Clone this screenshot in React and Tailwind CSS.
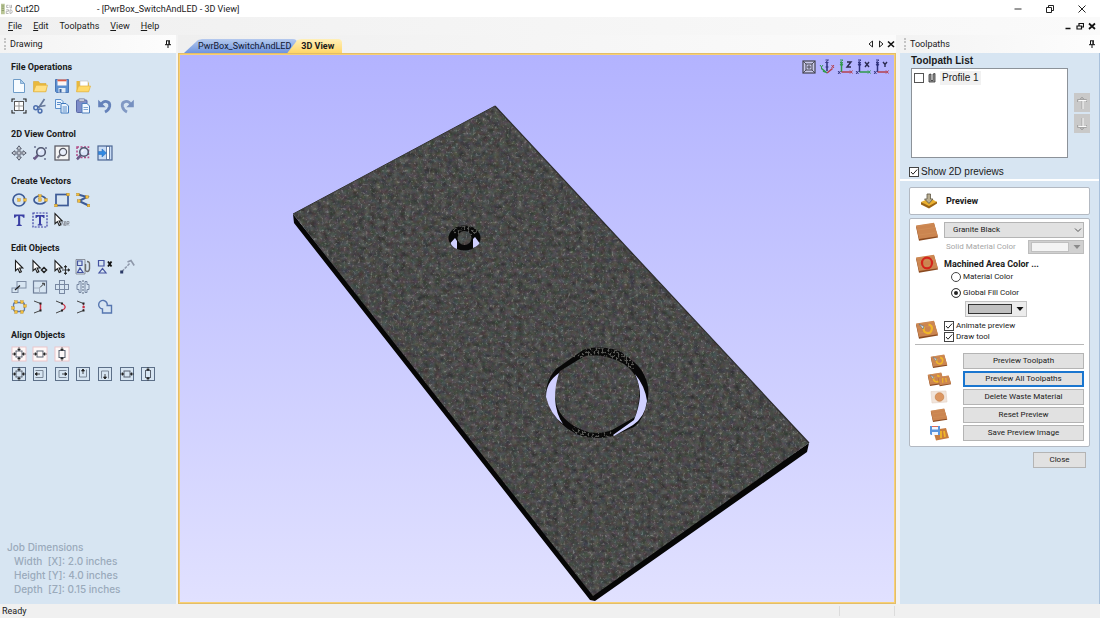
import React from "react";

const NAVY = "#3c5a96";

function Ico({ children, box = "0 0 16 16", className = "h-4 w-4" }) {
  return (
    <svg viewBox={box} className={className} fill="none" aria-hidden="true">
      {children}
    </svg>
  );
}

const Folder = () => (
  <>
    <path d="M1.5 13.5V3.5h5l1.5 2h6v8z" fill="#e9b93c" stroke="#d9a832" strokeWidth=".6" />
    <path d="M1.5 13.8 4 7.2h11.5l-1.8 6.6z" fill="#ffe084" stroke="#e3b23c" strokeWidth=".7" />
  </>
);
const Lens = ({ x = 9.5, y = 6.5 }) => (
  <>
    <path d={`M${x - 2.8} ${y + 2.8}l-4.2 4.6`} stroke="#6a5a86" strokeWidth="2.5" />
    <circle cx={x} cy={y} r="4.3" fill="#dbe5f8" stroke="#50566e" strokeWidth="1.6" />
    <path d={`M${x - 2} ${y}q.3-2 2.2-2.2`} stroke="#fff" />
  </>
);
const Pointer = ({ x = 0 }) => (
  <path transform={`translate(${x} 0)`} d="M3.5 1.5v10.2l2.4-2.1 1.8 4 1.7-.8-1.8-3.8h3.2z" fill="#fff" stroke="#1c1c1c" strokeWidth="1.1" />
);
const Arrows = ({ h, v, inset = 0 }) => (
  <g fill="#222" stroke="#222" strokeWidth=".6">
    {h && <path d={`M${1 + inset} 8h3M${15 - inset} 8h-3M3 6.6 4.8 8 3 9.4zM13 6.6 11.2 8 13 9.4z`} />}
    {v && <path d={`M8 ${1 + inset}v3M8 ${15 - inset}v-3M6.6 3 8 4.8 9.4 3zM6.6 13 8 11.2 9.4 13z`} />}
  </g>
);
const Frame = () => <rect x="1.5" y="1.5" width="13" height="13" stroke="#5c6f88" />;
const PinkFrame = () => <rect x="1" y="1" width="14" height="14" fill="#fdf8f8" stroke="#ecc6ca" />;
const Node = ({ x, y }) => <rect x={x - 1.3} y={y - 1.3} width="2.6" height="2.6" fill="#f3bd3a" stroke="#b98a22" strokeWidth=".4" />;

const groups = [
  {
    title: "File Operations",
    rows: [
      [
        ["New", <><path d="M2.5 1.5h7l4 4v9h-11z" fill="#f6fbff" stroke="#6e9cc8" /><path d="M9.5 1.5v4h4z" fill="#a9cbea" stroke="#6e9cc8" strokeWidth=".8" /></>],
        ["Open", <Folder />],
        ["Save", <><path d="M1.5 1.5h13v13h-12l-1-1z" fill="#5c8fd0" stroke="#4a76b4" /><rect x="3.5" y="1.5" width="9" height="6" fill="#fdf6f4" /><rect x="3.5" y="1.5" width="9" height="1.8" fill="#dd5b44" /><rect x="4.5" y="10" width="7" height="4.5" fill="#e2ecf6" /><rect x="5.5" y="11" width="2" height="3.5" fill="#3e65a0" /></>],
        ["Import", <><path d="M1.5 13.5V3h4l1 1.500h7.500v9z" fill="#e9b93c" /><path d="M5 3h8v7H5z" fill="#fff" stroke="#b9b9b9" strokeWidth=".6" /><path d="M1.500 13.800 3.500 8h12l-1.800 5.800z" fill="#ffd968" stroke="#e3b23c" strokeWidth=".7" /></>],
      ],
      [
        ["Job setup", <><rect x="3.500" y="3.500" width="9" height="9" fill="#fff" stroke="#555" /><path d="M8 3.500v9M3.500 8h9" stroke="#999" /><path d="M1 4V1h3M12 1h3v3M15 12v3h-3M4 15H1v-3" stroke="#222" strokeWidth="1.100" /></>],
        ["Cut", <><path d="M12.500 1 6.500 10M13.500 7.500 5 9" stroke="#66789a" strokeWidth="1.700" /><circle cx="3.800" cy="9.800" r="2" stroke="#4d6fae" strokeWidth="1.500" /><circle cx="8" cy="13" r="1.900" stroke="#4d6fae" strokeWidth="1.500" /></>],
        ["Copy", <><path d="M1.500 1.500h5.500l2 2v7H1.500z" fill="#eaf3fd" stroke="#5b8fcb" /><path d="M3 4.500h4M3 6.500h3" stroke="#5b8fcb" /><path d="M7 5.500h5l2.500 2.500v7H7z" fill="#eaf3fd" stroke="#3f78bd" /><path d="M8.500 9h4.500M8.500 11h4.500M8.500 13h4.500" stroke="#5b8fcb" /></>],
        ["Paste", <><rect x="1.500" y="2" width="10.500" height="12.500" rx="1" fill="#7d8cc9" stroke="#5a69a6" /><rect x="4" y=".8" width="5.500" height="2.800" fill="#c6cbdc" stroke="#6c7694" strokeWidth=".6" /><path d="M7 5.500h5l2.500 2.500v7H7z" fill="#f1f7fe" stroke="#4c7fbd" /><path d="M8.500 9.500h4.500M8.500 11.500h4.500" stroke="#7fa5d2" /></>],
        ["Undo", <><path d="M4 6.500C7 1.500 13.500 3 12.700 8.200 12 11.500 10 13 8 14" stroke="#6582ba" strokeWidth="2.800" /><path d="M1.200 1.800v7.500h7.500z" fill="#6582ba" /></>],
        ["Redo", <><path d="M12 6.500C9 1.500 2.500 3 3.300 8.200 4 11.500 6 13 8 14" stroke="#8199c4" strokeWidth="2.800" /><path d="M14.800 1.800v7.500h-7.500z" fill="#7690c0" /></>],
      ],
    ],
  },
  {
    title: "2D View Control",
    rows: [
      [
        ["Pan", <><path d="M8 .8 10.300 3.800H8.900v3.300h3.300V5.700L15.200 8l-3 2.300V8.900H8.900v3.300h1.400L8 15.200l-2.300-3h1.400V8.900H3.800v1.400L.8 8l3-2.300v1.400h3.300V3.800H5.700z" fill="#cfd4dd" stroke="#596070" strokeWidth="1" /></>],
        ["Zoom", <><path d="M2 2h2M12 14h2M2 12v2M14 2v2" stroke="#6b7391" strokeWidth="1.500" /><Lens x={9} y={7} /></>],
        ["Zoom to drawing", <><rect x="1" y="1" width="14" height="14" fill="#f5f5f5" stroke="#5c5c66" strokeWidth="1.300" /><path d="M6.500 9.500 3.500 13" stroke="#7a7a86" strokeWidth="2" /><circle cx="9" cy="7" r="3.600" fill="#e8eefa" stroke="#55565f" strokeWidth="1.200" /></>],
        ["Zoom to selection", <><rect x="2" y="2" width="11.500" height="10.500" stroke="#b24a86" strokeWidth="1.500" strokeDasharray="2 1.500" /><Lens x={9} y={7} /></>],
        ["Dock view", <><rect x="1" y="1" width="14" height="14" fill="#c9dcf5" stroke="#4d6794" strokeWidth="1.200" /><rect x="9.500" y="1.500" width="3" height="13" fill="#fff" stroke="#4d6794" strokeWidth=".8" /><path d="M1.500 6.500H5V4l4.500 4L5 12V9.500H1.500z" fill="#3188e2" stroke="#2469b5" strokeWidth=".5" /></>],
      ],
    ],
  },
  {
    title: "Create Vectors",
    rows: [
      [
        ["Circle", <><circle cx="8" cy="8" r="6" stroke={NAVY} strokeWidth="1.700" /><Node x={8} y={8} /><Node x={14} y={8} /></>],
        ["Ellipse", <><ellipse cx="8" cy="8" rx="6" ry="4" stroke={NAVY} strokeWidth="1.700" /><Node x={8} y={8} /><Node x={8} y={4} /><Node x={14} y={8} /></>],
        ["Rectangle", <><rect x="2" y="2.500" width="12" height="11" stroke={NAVY} strokeWidth="1.700" /><Node x={14} y={2.5} /><Node x={2} y={13.5} /></>],
        ["Polyline", <><path d="M3 2.500 12 5 4 9l9.500 4.500" stroke={NAVY} strokeWidth="2" /><Node x={3} y={2.5} /><Node x={12} y={5} /><Node x={4} y={9} /><Node x={13.5} y={13.5} /></>],
      ],
      [
        ["Text", <path d="M3 2.500h10.500v3.300h-1.200Q12 4 9.200 4V12q.1.900 1.500.9V14H5.600v-1.100q1.400 0 1.500-.9V4Q4.500 4 4.200 5.800H3z" fill="#3a3fa4" />],
        ["Text in box", <><rect x="1" y="1" width="14" height="14" stroke="#3a3fa4" strokeWidth="1.200" strokeDasharray="2 1.200" /><path d="M3.500 3h9v3h-1Q11.300 4.400 9 4.400v7.200q.1.900 1.300.9v1H5.700v-1q1.200 0 1.300-.9V4.400Q4.700 4.400 4.500 6h-1z" fill="#3a3fa4" /></>],
        ["Edit text", <><Pointer x={-2.500} /><path d="M7 13.500l1.300-4 1.300 4M10.500 9.500v4h1.300v-4zM13 13.500v-4h2v2h-2l2 2" stroke="#8a8f98" strokeWidth=".9" /></>],
      ],
    ],
  },
  {
    title: "Edit Objects",
    rows: [
      [
        ["Select", <Pointer x={1} />],
        ["Node edit", <><Pointer x={-2.500} /><path d="M12 8.500 14.500 11 12 13.500 9.500 11z" stroke="#222" strokeWidth="1.500" /></>],
        ["Transform", <><Pointer x={-2.500} /><path d="M11.500 7.500v7M8 11h7M11.500 6.500l-1.200 1.500h2.400zM11.500 15.500l-1.200-1.500h2.400zM15.800 11l-1.500-1.200v2.400z" stroke="#222" strokeWidth=".9" fill="#222" /></>],
        ["Group", <><path d="M2.500 2H7v4.500H2.500zM2.500 13.500h5.500L5 9z" stroke="#4453a0" strokeWidth="1.200" /><path d="M1 .5h9v14.500H1z" stroke="#6a6f7a" strokeWidth=".7" /><path d="M12 2.500q2.800 0 2.500 3v4q-.2 3-2.300 3t-1.700-3V5" stroke="#6b6b6b" strokeWidth="1.400" /></>],
        ["Ungroup", <><path d="M1.500 1.500H7V7H1.500zM2 14h7l-3.500-4.500z" stroke="#4453a0" strokeWidth="1.200" /><path d="M11 2.500l3.500 5M14.500 2.500 11 7.500" stroke="#111" strokeWidth="1.800" /></>],
        ["Measure", <><path d="M3 12.500 11 4" stroke="#8e98aa" strokeWidth="1.500" strokeDasharray="3 1" /><rect x="1.200" y="11.500" width="3" height="3" fill="#2b3a67" /><path d="M8.500 3 12 1.500l3.200 5" stroke="#8e98aa" strokeWidth="1.600" /></>],
      ],
      [
        ["Move", <g stroke="#7f8ea5"><rect x="6" y="2.500" width="9" height="6.500" /><rect x="1" y="9" width="6" height="4.500" /><path d="M4 11 9 6.500" stroke="#222" strokeWidth="1.200" /></g>],
        ["Scale", <><rect x="1.500" y="2" width="13" height="12" stroke="#6f7f99" strokeWidth="1.200" /><path d="M2 9h5.500v5" stroke="#a6b2c4" /><path d="M8 8.500 12 4.500M10 4.300h2.400v2.400" stroke="#333" /></>],
        ["Rotate", <><rect x="5.500" y="1.500" width="5" height="13" stroke="#7888a2" /><rect x="1.500" y="5.500" width="13" height="5" stroke="#7888a2" /></>],
        ["Mirror", <><path d="M8 1v14" stroke="#5f6c82" strokeDasharray="2 1" /><path d="M6 2.500H4v3H2v5h2v3h2zM10 2.500h2v3h2v5h-2v3h-2z" stroke="#7888a2" /></>],
      ],
      [
        ["Offset", <><rect x="2.500" y="3.500" width="11" height="9" rx="2.500" stroke="#5b7bb4" strokeWidth="1.300" /><Node x={5} y={3} /><Node x={11} y={3} /><Node x={2} y={9} /><Node x={14} y={7} /><Node x={5} y={13} /><Node x={11} y={13} /></>],
        ["Fillet", <><path d="M2 2 8.500 4.500M2 14l6.500-2.500" stroke="#444" /><path d="M8.500 5v6" stroke="#cc3344" strokeWidth="1.500" /><path d="M7.500 3.500h2v2h-2zM7.500 10.500h2v2h-2z" fill="#222" /></>],
        ["Join curve", <><path d="M2 2l6 2.500M2 14l6-2.500" stroke="#444" /><path d="M8 4.500Q14.500 8 8 11.500" stroke="#cc3344" strokeWidth="1.300" /><path d="M7 3.500h2v2H7zM7 10.500h2v2H7z" fill="#222" /></>],
        ["Join points", <><path d="M2 2l6.500 2.500M2 14l6.500-2.500" stroke="#444" /><path d="M8.500 5v6" stroke="#cc3344" strokeWidth="1.200" strokeDasharray="1.500 1" /><path d="M7.500 3.500h2v2h-2zM7.500 10.500h2v2h-2z" fill="#222" /><rect x="7.500" y="7" width="2.200" height="2.200" fill="#cc3344" /></>],
        ["Weld", <path d="M10.200 6.500A4.300 4.300 0 1 0 5.500 10V14h9V6.500z" stroke="#5676b0" strokeWidth="1.400" />],
      ],
    ],
  },
  {
    title: "Align Objects",
    rows: [
      [
        ["Center in material", <><PinkFrame /><rect x="5" y="5" width="6" height="6" stroke="#59616e" /><Arrows h v /></>],
        ["Center horizontally", <><PinkFrame /><rect x="5" y="5" width="6" height="6" stroke="#59616e" /><Arrows h /></>],
        ["Center vertically", <><PinkFrame /><rect x="5" y="4.500" width="6" height="7" stroke="#59616e" /><Arrows v /></>],
      ],
      [
        ["Align centers", <><Frame /><rect x="5" y="5" width="6" height="6" stroke="#59616e" /><Arrows h v /></>],
        ["Align left", <><Frame /><path d="M3.500 4.500h7.500v7H3.500" stroke="#7b8797" /><path d="M3 8h5M3 8l2-1.500v3z" stroke="#222" fill="#222" strokeWidth=".8" /></>],
        ["Align right", <><Frame /><path d="M12.500 4.500H5v7h7.500" stroke="#7b8797" /><path d="M13 8H8M13 8l-2-1.500v3z" stroke="#222" fill="#222" strokeWidth=".8" /></>],
        ["Align top", <><Frame /><path d="M4.500 3.500V11h7V3.500" stroke="#7b8797" /><path d="M8 3v5M8 3 6.500 5h3z" stroke="#222" fill="#222" strokeWidth=".8" /></>],
        ["Align bottom", <><Frame /><path d="M4.500 12.500V5h7v7.500" stroke="#7b8797" /><path d="M8 13V8M8 13l-1.500-2h3z" stroke="#222" fill="#222" strokeWidth=".8" /></>],
        ["Align horizontal centers", <><Frame /><rect x="5" y="5" width="6" height="6" stroke="#59616e" /><Arrows h /></>],
        ["Align vertical centers", <><Frame /><rect x="5.500" y="4.500" width="5" height="7" stroke="#59616e" /><Arrows v /></>],
      ],
    ],
  },
];

function Pin() {
  return (
    <Ico box="0 0 8 8" className="h-2 w-2">
      <path d="M2 .8h4M2.500 1v3.500M5.200 1v3.500M1 4.700h6M4 4.700V8" stroke="#111" />
      <path d="M4.500 1h1v3.500h-1z" fill="#111" />
    </Ico>
  );
}

function Caption({ title }) {
  return (
    <header className="flex h-[18px] shrink-0 items-center gap-1 bg-linear-to-r from-[#f3f3f3] to-[#fdfdfd] px-1 text-[9px]">
      <span className="h-3 border-l-2 border-dotted border-[#c4c4c4]" />
      <h2 className="flex-1">{title}</h2>
      <button aria-label={`Pin ${title}`}><Pin /></button>
    </header>
  );
}

function DrawingPanel() {
  return (
    <aside className="flex w-44 shrink-0 flex-col">
      <Caption title="Drawing" />
      <div className="flex flex-1 flex-col bg-[#d7e5f2] pt-1">
        <div className="flex flex-col gap-2">
          {groups.map((g) => (
            <section key={g.title}>
              <h3 className="flex h-[19px] items-center px-[11px] text-[9px] font-bold">{g.title}</h3>
              {g.rows.map((row, i) => (
                <div key={i} className="ml-2 grid h-5 w-[151px] grid-cols-7 items-center">
                  {row.map(([label, art]) => (
                    <button key={label} aria-label={label} className="flex justify-center">
                      <Ico>{art}</Ico>
                    </button>
                  ))}
                </div>
              ))}
            </section>
          ))}
        </div>
        <dl className="mt-auto px-[7px] pb-2 font-['Inter',sans-serif] text-[10px] leading-[14px] font-medium text-[#9aaabb]">
          <dt>Job Dimensions</dt>
          <dd className="pl-[7px] whitespace-pre">Width  [X]: 2.0 inches</dd>
          <dd className="pl-[7px] whitespace-pre">Height [Y]: 4.0 inches</dd>
          <dd className="pl-[7px] whitespace-pre">Depth  [Z]: 0.15 inches</dd>
        </dl>
      </div>
    </aside>
  );
}

const RING_OUT = "M583 350C592 346 612 347 621 352L634 362C646 372 650 387 648 398 646 412 640 423 634 427L613 436C603 439 583 439 573 432 558 424 548 408 546 395 546 385 549 377 556 369Z";
const RING_IN = "M583 357C592 354 608 356 618 361 630 366 638 376 639 388 640 400 637 412 635 417L612 430C602 434 590 434 580 429 566 423 556 411 555 398 554 387 556 378 560 371Z";

function Scene() {
  return (
    <svg viewBox="180 55 714 547" className="h-full w-full" role="img" aria-label="Granite plate with two machined profiles">
      <defs>
        <filter id="granite" x="0" y="0" width="1" height="1" colorInterpolationFilters="sRGB">
          <feTurbulence type="fractalNoise" baseFrequency=".17 .19" numOctaves="5" seed="23" />
          <feColorMatrix values=".18 .08 .08 0 .11  .08 .18 .08 0 .112  .08 .08 .18 0 .108  0 0 0 0 1" result="base" />
          <feTurbulence type="fractalNoise" baseFrequency=".41 .37" numOctaves="3" seed="5" />
          <feColorMatrix values="0 0 0 0 .62  0 0 0 0 .63  0 0 0 0 .62  4 0 0 0 -2.300" result="flecks" />
          <feComposite in="flecks" in2="base" operator="arithmetic" k2=".25" k3="1" />
          <feComposite in2="SourceGraphic" operator="in" />
        </filter>
        <filter id="chips" x="0" y="0" width="1" height="1" colorInterpolationFilters="sRGB">
          <feTurbulence type="fractalNoise" baseFrequency=".5" numOctaves="2" seed="3" />
          <feColorMatrix values="0 0 0 0 .34  0 0 0 0 .34  0 0 0 0 .33  8 0 0 0 -3.900" />
          <feComposite in2="SourceGraphic" operator="in" />
        </filter>
      </defs>
      <path d="M293 214 294 223 590 600 595 601 807 452 809 443 593 590z" fill="#060606" />
      <path d="M495 106 809 443 593 596 293 214z" fill="#484847" filter="url(#granite)" />
      <path d="M495 106 809 443" stroke="#2b2b2b" strokeWidth="1.200" />
      <path d="M293 214 495 106" stroke="#333" strokeWidth="1" />

      <path fillRule="evenodd" d={RING_OUT + RING_IN} fill="#080808" />
      <path d="M571 357 585 349Q607 344 624 353L636 365 631 373 618 361Q600 352 583 358zM572 426Q590 437 611 431L612 437Q590 441 573 433z" fill="#080808" filter="url(#chips)" />
      <path d="M559 373Q555 385 555 399 556 414 563 424 550 414 546 397 546 382 559 373z" fill="#d0d0ff" />
      <path d="M635 374Q645 386 647 401 645 417 633 425L614 436 613 435 634 420Q639 408 640 396 640 385 635 374z" fill="#d0d0ff" />

      <ellipse cx="464.500" cy="238" rx="16" ry="12.500" fill="#080808" />
      <ellipse cx="465" cy="231" rx="12" ry="5" fill="#080808" filter="url(#chips)" />
      <path d="M450.500 243 455 238 457 241V249Q452 247 450.500 243zM473 248V239L475 237 479.500 243Q478 246 473 248z" fill="#d0d0ff" />
      <circle cx="464.500" cy="238" r="7" fill="#484847" filter="url(#granite)" />
    </svg>
  );
}

const RED = "#b4404e";
const GREEN = "#2f9a4a";
const INK = "#2c2f78";

function AxisLetter({ name }) {
  const d = { Z: "M10 3h4l-4 5h4", X: "M10 3l4 5M14 3l-4 5", Y: "M10 3l2 2.500 2-2.500M12 5.500V8" }[name];
  return <path d={d} stroke="#2b2b50" strokeWidth="1.400" />;
}

function Axis({ name, up, right }) {
  return (
    <Ico>
      <path d="M4.500 4v9" stroke={up} strokeWidth="1.500" />
      <path d="M4.500 13h9" stroke={right} strokeWidth="1.500" />
      <path d="M3 1h3l-3 2.500h3M4.500 4 3 6h3z" stroke={up} strokeWidth=".9" />
      <path d="M1 12l2.500 3M3.500 12 1 15" stroke={INK} strokeWidth=".9" />
      <path d="M13 11.500l2.500 3M15.500 11.500l-2.500 3" stroke={right} strokeWidth="1" />
      <AxisLetter name={name} />
    </Ico>
  );
}

const views = [
  ["Fit view", <Ico key="f"><rect x="2" y="2" width="12" height="12" fill="#c9c9ea" stroke="#44444f" strokeWidth="1.200" /><rect x="5" y="5" width="6" height="6" stroke="#44444f" /><path d="M2 2l3 3M14 2l-3 3M2 14l3-3M14 14l-3-3M7 7h2v2H7z" stroke="#44444f" strokeWidth=".9" /></Ico>],
  ["Isometric", <Ico key="i"><path d="M8 4v8" stroke={INK} strokeWidth="1.500" /><path d="M6.500 1h3L6.500 3.500h3M6.500 8h3" stroke={INK} strokeWidth=".9" /><path d="M8 14 2.500 9.500M4 12l2.500 1" stroke={GREEN} strokeWidth="1.600" /><path d="M1 6l1.500 2L4 6M2.500 8v2" stroke={GREEN} /><path d="M8 14l5.500-4.500" stroke={RED} strokeWidth="1.600" /><path d="M12.500 6l2.500 3M15 6l-2.500 3" stroke={RED} /></Ico>],
  ["View along Z", <Axis key="z" name="Z" up={GREEN} right={RED} />],
  ["View along X", <Axis key="x" name="X" up={INK} right={GREEN} />],
  ["View along Y", <Axis key="y" name="Y" up={INK} right={RED} />],
];

function Workspace() {
  return (
    <main className="mr-1 ml-0.5 flex min-w-0 flex-1 flex-col">
      <div className="flex h-[18px] shrink-0 items-end bg-linear-to-r from-[#efefef] to-[#fbfbfb] pl-1.5 text-[9px]" role="tablist">
        <button role="tab" aria-selected="false" className="h-[14px] rounded-tr bg-linear-to-b from-[#b5c9ee] to-[#6f94de] pr-1.5 pl-[14px] text-[#101830] [clip-path:polygon(0_100%,14px_8%,18px_0,100%_0,100%_100%)]">
          PwrBox_SwitchAndLED
        </button>
        <button role="tab" aria-selected="true" className="-ml-2.5 h-[14px] rounded-tr bg-linear-to-b from-[#fff0b8] to-[#ffd666] pr-2 pl-[14px] font-bold [clip-path:polygon(0_100%,10px_8%,14px_0,100%_0,100%_100%)]">
          3D View
        </button>
        <div className="ml-auto flex h-full items-center gap-0.5">
          <button aria-label="Previous tab"><Ico box="0 0 8 8" className="h-2 w-2"><path d="M5.500 1v6L2 4z" stroke="#222" /></Ico></button>
          <button aria-label="Next tab"><Ico box="0 0 8 8" className="h-2 w-2"><path d="M2.500 1v6L6 4z" stroke="#222" /></Ico></button>
          <button aria-label="Close tab" className="pr-px"><Ico box="0 0 8 8" className="h-2 w-2"><path d="M1 1.500l6 5.500M7 1.500 1 7" stroke="#111" strokeWidth="1.600" /></Ico></button>
        </div>
      </div>
      <div className="relative min-h-0 flex-1 border-2 border-[#f8d074] bg-linear-to-b from-[#b3b3ff] to-[#e1e1ff] outline outline-1 -outline-offset-1 outline-[#e3bd68]">
        <Scene />
        <div className="absolute top-1 right-[5px] flex gap-0.5">
          {views.map(([label, art]) => (
            <button key={label} aria-label={label}>{art}</button>
          ))}
        </div>
      </div>
    </main>
  );
}

function Tile({ children, className = "h-5 w-6" }) {
  return (
    <Ico box="0 0 24 20" className={className}>
      <path d="M1 4.500 19 1.500 23 15.500 4 18.800z" fill="#8a4a20" />
      <path d="M1 3.500 19 .8 23 14.200 4 17z" fill="#cb8550" />
      <path d="M2 4.200 18.500 1.800M3 8l17-2.500M4 13l17.500-2.500" stroke="#d08e58" strokeWidth=".8" />
      {children}
    </Ico>
  );
}
const GoldO = () => (
  <>
    <path d="M9 6.500Q7.500 12 12 13T17 8Q16.500 5 13.500 4.500" stroke="#f0b629" strokeWidth="2.200" />
    <path d="M4 4l5 2.500-1 2.500z" fill="#e8edf2" stroke="#60707c" strokeWidth=".7" />
  </>
);

function Check({ label, checked, className }) {
  return (
    <label className={`flex items-center gap-0.5 ${className}`}>
      <span className="grid">
        <input type="checkbox" defaultChecked={checked} className="peer col-start-1 row-start-1 h-[10px] w-[10px] appearance-none border border-[#444] bg-white" />
        <Ico box="0 0 10 10" className="pointer-events-none col-start-1 row-start-1 hidden h-[10px] w-[10px] peer-checked:block">
          <path d="M2 5l2 2.200L8.200 2.500" stroke="#222" />
        </Ico>
      </span>
      {label}
    </label>
  );
}

function Radio({ label, checked }) {
  return (
    <label className="flex h-4 items-center gap-0.5">
      <input type="radio" name="fill" defaultChecked={checked} className="h-[10px] w-[10px] appearance-none rounded-full border border-[#444] bg-white checked:bg-[#222] checked:inset-ring-2 checked:inset-ring-white" />
      {label}
    </label>
  );
}

function Swatch({ label, disabled }) {
  return (
    <button
      aria-label={label}
      aria-haspopup="listbox"
      disabled={disabled}
      className={disabled ? "flex h-[14px] w-14 items-center gap-1 border border-[#bdbdbd] bg-[#d0d0d0] px-0.5" : "flex h-4 w-[62px] items-center gap-1 border border-[#c2c2c2] bg-[#ececec] px-0.5"}
    >
      <span className={disabled ? "h-[10px] flex-1 border border-[#c0c0c0] bg-[#f4f4f4]" : "h-[10px] flex-1 border border-[#333] bg-[#c0c0c0]"} />
      <Ico box="0 0 8 6" className="h-1.5 w-2"><path d="M.5 1h7L4 5z" fill={disabled ? "#8a8a8a" : "#111"} /></Ico>
    </button>
  );
}

const actions = [
  ["Preview Toolpath", <Tile key="a" className="h-[15px] w-[18px]"><GoldO /></Tile>],
  ["Preview All Toolpaths", <span key="b" className="flex items-end"><Tile className="h-[15px] w-[18px]"><GoldO /></Tile><Tile className="-ml-2 h-3 w-[15px]"><path d="M9 5v8M14 5l1 7" stroke="#f0b629" strokeWidth="2" /></Tile></span>],
  ["Delete Waste Material", <Ico key="c" box="0 0 18 14" className="h-[14px] w-[18px]"><path d="M1 1.500 16 1l1 11-15 1z" fill="#f1e4da" stroke="#e2d2c6" strokeWidth=".6" /><circle cx="9.500" cy="7" r="4.300" fill="#dc9762" stroke="#c07840" strokeWidth=".6" /></Ico>],
  ["Reset Preview", <Tile key="d" className="h-[15px] w-[18px]" />],
  ["Save Preview Image", <Ico key="e" box="0 0 20 16" className="h-4 w-5"><path d="M4 5l13-2 3 10-13 2.500z" fill="#c67c3f" /><path d="M12 6v7M15 6l1 6" stroke="#f0b629" strokeWidth="1.800" /><path d="M1 1h10v9H2L1 9z" fill="#5b95dc" /><path d="M3 1h6v3.500H3zM3 7h6v3H3z" fill="#f3f6fb" /><path d="M3 1h6v1H3z" fill="#db6a55" /></Ico>],
];

function ToolpathsPanel() {
  return (
    <aside className="flex w-[200px] shrink-0 flex-col">
      <Caption title="Toolpaths" />
      <div className="flex flex-1 flex-col border-r border-[#a9c1dc] bg-[#d7e5f2]">
        <section className="border-b-2 border-white pr-[9px] pl-[11px] font-['Liberation_Sans',sans-serif] text-[10px]">
          <h3 className="text-[10px] leading-[15px] font-bold">Toolpath List</h3>
          <div className="flex items-center gap-1.5">
            <ul className="h-[90px] flex-1 border border-[#8c9299] bg-white p-0.5">
              <li>
                <label className="flex items-center gap-1">
                  <input type="checkbox" className="h-[10px] w-[10px] appearance-none border border-[#555] bg-white" />
                  <Ico box="0 0 8 10" className="h-[10px] w-2"><path d="M1 1.500v7.500h6V.5L5 1v6.500H3V1z" fill="#9b9b9b" stroke="#333" strokeWidth=".8" /></Ico>
                  <span className="bg-[#f1f1f1] px-0.5 leading-[14px]">Profile 1</span>
                </label>
              </li>
            </ul>
            <div className="flex flex-col gap-0.5">
              <button aria-label="Move toolpath up" className="flex h-[19px] w-4 items-center justify-center bg-[#c9c9c9]">
                <Ico box="0 0 12 14" className="h-[14px] w-3"><path d="M1.500 6V3.500h9V6M6 1v12M4 3l2-2 2 2" stroke="#a4a4a4" /><path d="M7 4.500V13M2.500 4.500h8" stroke="#fafafa" /></Ico>
              </button>
              <button aria-label="Move toolpath down" className="flex h-[19px] w-4 items-center justify-center bg-[#c9c9c9]">
                <Ico box="0 0 12 14" className="h-[14px] w-3"><path d="M1.500 8v2.500h9V8M6 1v12M4 11l2 2 2-2" stroke="#a4a4a4" /><path d="M7 1v9M2.500 9.500h8" stroke="#fafafa" /></Ico>
              </button>
            </div>
          </div>
          <Check label="Show 2D previews" checked className="mt-[7px] -ml-0.5 h-[14px]" />
        </section>

        <section className="pt-1.5 pr-[9px] pl-[9px] text-[8px]">
          <h3 className="flex h-7 items-center gap-2 rounded-xs border border-[#b3b9c2] bg-white pl-2.5 text-[9px] font-bold">
            <Ico box="0 0 18 16" className="h-4 w-[18px]">
              <path d="M1 9l9-4 7 4-8 5.500z" fill="#e9b030" /><path d="M1 9v2.500l8 4V13zM9 13v2.500l8-5V8.500z" fill="#9a6415" />
              <path d="M7 1h3.500v5H13L9 10.500 4.500 6H7z" fill="#b9ae92" stroke="#5d5644" strokeWidth=".8" />
            </Ico>
            Preview
          </h3>

          <div className="mt-[3px] rounded-xs border border-[#b3b9c2] bg-white px-[5px] pt-[3px] pb-[5px]">
            <div className="grid grid-cols-[24px_1fr] gap-x-[5px]">
              <Tile />
              <div>
                <div className="grid">
                  <select aria-label="Material" className="col-start-1 row-start-1 h-4 w-full appearance-none border border-[#b4b4b4] bg-[#e1e1e1] pl-2">
                    <option>Granite Black</option>
                  </select>
                  <Ico box="0 0 8 6" className="pointer-events-none col-start-1 row-start-1 mr-0.5 h-1.5 w-2 self-center justify-self-end"><path d="M1 1.500l3 3 3-3" stroke="#555" /></Ico>
                </div>
                <div className="mt-0.5 flex items-center justify-between pl-0.5 text-[#a6a6a6]">
                  Solid Material Color
                  <Swatch label="Solid material color" disabled />
                </div>
              </div>
              <Tile>
                <ellipse cx="12" cy="9" rx="5" ry="5.300" stroke="#d4241b" strokeWidth="2.200" />
              </Tile>
              <fieldset>
                <legend className="h-[15px] pt-[5px] text-[9px] leading-[10px] font-bold">Machined Area Color ...</legend>
                <div className="pl-[7px]">
                  <Radio label="Material Color" />
                  <Radio label="Global Fill Color" checked />
                  <div className="mb-[3px] pl-3.5"><Swatch label="Global fill color" /></div>
                </div>
              </fieldset>
              <Tile><GoldO /></Tile>
              <div>
                <Check label="Animate preview" checked className="h-[11px]" />
                <Check label="Draw tool" checked className="h-[11px]" />
              </div>
            </div>
            <hr className="mt-0.5 mb-2 border-[#b8b8b8]" />
            <ul className="flex flex-col gap-0.5">
              {actions.map(([label, art], i) => (
                <li key={label} className="flex h-4 items-center">
                  <span className="flex w-12 shrink-0 items-center justify-center">{art}</span>
                  <button className={i === 1 ? "h-4 flex-1 border-2 border-[#1a76cf] bg-[#e1e1e1] leading-3" : "h-4 flex-1 border border-[#b4b4b4] bg-[#e1e1e1] leading-[14px]"}>{label}</button>
                </li>
              ))}
            </ul>
          </div>
          <div className="flex justify-end pt-[5px] pr-1">
            <button className="h-4 w-[53px] border border-[#b4b4b4] bg-[#e1e1e1] leading-[14px]">Close</button>
          </div>
        </section>
      </div>
    </aside>
  );
}

const menus = [["F", "ile"], ["E", "dit"], ["", "Toolpaths"], ["V", "iew"], ["H", "elp"]];

export default function App() {
  return (
    <div className="flex h-screen min-h-[600px] flex-col overflow-hidden bg-[#f3f3f3] font-['Roboto','Noto_Sans',sans-serif] text-[9px] leading-3 text-[#1a1a1a]">
      <header className="flex h-[17px] shrink-0 items-center bg-white pl-px">
        <Ico className="h-3 w-3">
          <path d="M0 1h5v14H0z" fill="#b9c596" />
          <path d="M1 4h3M1 7h3M1 10h3" stroke="#7f8f60" />
          <path d="M10 3H7.500v3H10M12 2.500v4h2v-4M7 9h3v2H7v3h3M12 9v5q3 0 3-2.500T12 9z" stroke="#a9a9a9" strokeWidth="1.100" />
        </Ico>
        <h1 className="flex flex-1 items-center pl-0.5"><span className="w-[82px]">Cut2D</span>- [PwrBox_SwitchAndLED - 3D View]</h1>
        <div className="flex items-center gap-6 pr-3.5">
          <button aria-label="Minimize"><Ico box="0 0 8 8" className="h-2 w-2"><path d="M.5 4h7" stroke="#333" /></Ico></button>
          <button aria-label="Restore"><Ico box="0 0 8 8" className="h-2 w-2"><path d="M.5 2.500h5v5h-5zM2.500 2V.5h5v5H6" stroke="#222" /></Ico></button>
          <button aria-label="Close window"><Ico box="0 0 8 8" className="h-2 w-2"><path d="M.5.5l7 7M7.500.5l-7 7" stroke="#222" /></Ico></button>
        </div>
      </header>
      <nav className="flex h-[18px] shrink-0 items-center gap-[11px] bg-linear-to-r from-[#f0f0f0] to-[#fafafa] pr-1 pl-2">
        {menus.map(([key, rest]) => (
          <button key={rest}><u>{key}</u>{rest}</button>
        ))}
        <div className="ml-auto flex gap-1">
          <button aria-label="Minimize document"><Ico box="0 0 8 8" className="h-2 w-2"><path d="M1.500 6.500h5" stroke="#111" strokeWidth="1.500" /></Ico></button>
          <button aria-label="Restore document"><Ico box="0 0 8 8" className="h-2 w-2"><path d="M1 4h4.500v3H1zM3 3.500V1.500h4.500V5H6" stroke="#111" strokeWidth="1.200" /></Ico></button>
          <button aria-label="Close document"><Ico box="0 0 8 8" className="h-2 w-2"><path d="M1 1.500l6 5.500M7 1.500 1 7" stroke="#111" strokeWidth="1.700" /></Ico></button>
        </div>
      </nav>
      <div className="flex min-h-0 flex-1">
        <DrawingPanel />
        <Workspace />
        <ToolpathsPanel />
      </div>
      <footer className="flex h-[14px] shrink-0 items-center bg-[#f0f0f0] pl-0.5">
        <span className="flex-1">Ready</span>
        <span className="h-2.5 w-14 border-x border-[#dcdcdc]" />
        <span className="w-[205px]" />
      </footer>
    </div>
  );
}
